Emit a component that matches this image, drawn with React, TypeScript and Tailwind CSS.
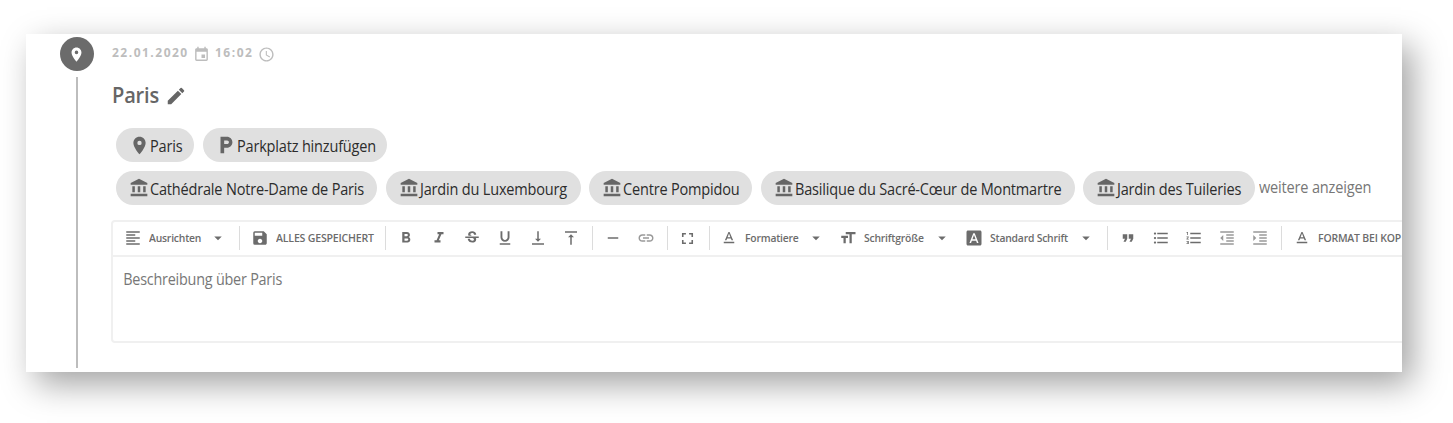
import type { ReactNode } from "react";
import type { IconType } from "react-icons";
import {
  MdPlace, MdEvent, MdAccessTime, MdEdit, MdLocalParking, MdAccountBalance,
  MdFormatAlignLeft, MdArrowDropDown, MdSave, MdFormatBold, MdFormatItalic,
  MdStrikethroughS, MdFormatUnderlined, MdVerticalAlignBottom, MdVerticalAlignTop,
  MdRemove, MdLink, MdFullscreen, MdTextFormat, MdFormatSize, MdFontDownload,
  MdFormatQuote, MdFormatListBulleted, MdFormatListNumbered,
  MdFormatIndentDecrease, MdFormatIndentIncrease,
} from "react-icons/md";

function Chip({ icon: Icon, width, iconClass = "mr-px size-5", children }: {
  icon: IconType; width: string; iconClass?: string; children: ReactNode;
}) {
  return (
    <div className={`flex h-[34px] shrink-0 items-center rounded-full bg-[#e0e0e0] pl-[13px] text-[15.5px] tracking-[-0.2px] text-[#2c2c2c] ${width}`}>
      <Icon className={`shrink-0 text-[#666] ${iconClass}`} />
      <span className="origin-left scale-x-[0.937] whitespace-nowrap pt-1">{children}</span>
    </div>
  );
}

function Tool({ icon: Icon, className = "size-[18px]" }: { icon: IconType; className?: string }) {
  return (
    <button className="flex h-full w-[33px] shrink-0 items-center justify-center">
      <Icon className={className} />
    </button>
  );
}

function Group({ width, pad = "pl-[3px]", last = false, children }: {
  width: string; pad?: string; last?: boolean; children: ReactNode;
}) {
  return (
    <div className={`flex h-6 shrink-0 items-center ${last ? "" : "border-r"} border-[#dcdcdc] ${width} ${pad}`}>
      {children}
    </div>
  );
}

function Menu({ icon: Icon, width, textWidth, label }: { icon: IconType; width: string; textWidth: string; label: string }) {
  return (
    <button className={`flex shrink-0 items-center ${width}`}>
      <Icon className="mr-[7px] size-[18px] shrink-0" />
      <span className={`origin-left scale-x-[0.94] whitespace-nowrap text-left ${textWidth}`}>{label}</span>
      <MdArrowDropDown className="ml-[8px] size-[18px] shrink-0" />
    </button>
  );
}

export default function App() {
  return (
    <div className="h-[423px] w-full overflow-hidden bg-white pl-[26px] pt-[34px] font-['Open_Sans',sans-serif]">
      <div className="h-[338px] w-[1376px] shadow-[10px_12px_32px_rgba(0,0,0,0.37)]">
        <main className="flex h-full w-full overflow-hidden bg-white">
          <aside className="flex w-[86px] shrink-0 flex-col items-center pt-[3px]">
            <div className="ml-[15px] flex size-[34px] items-center justify-center rounded-full bg-[#6b6b6b] text-white">
              <MdPlace className="size-[17px]" />
            </div>
            <div className="ml-4 mt-[6px] h-[291px] w-[2px] bg-[#bdbdbd]" />
          </aside>
          <section className="-ml-px w-[1400px] shrink-0">
            <div className="flex h-[38px] items-center pl-px text-[12px] font-bold tracking-[1.5px] text-[#bdbdbd]">
              <span className="w-[77px] whitespace-nowrap">22.01.2020</span>
              <MdEvent className="ml-[4px] mr-[5px] mt-0.5 size-[17px]" />
              <span className="w-[39px] whitespace-nowrap">16:02</span>
              <MdAccessTime className="ml-[4px] mt-0.5 size-[17px]" />
            </div>
            <div className="flex h-[56px] items-start pl-px pt-[7px] text-[#666]">
              <h1 className="w-[47px] origin-left scale-x-[0.91] text-[22px] font-semibold leading-[30px] tracking-[-0.2px]">Paris</h1>
              <MdEdit className="ml-[6px] mt-[6px] size-[22px]" />
            </div>
            <div className="flex gap-[8.5px] pl-[5px]">
              <Chip icon={MdPlace} iconClass="size-[21px]" width="w-[78px]">Paris</Chip>
              <Chip icon={MdLocalParking} iconClass="-ml-px size-[22px]" width="w-[184.5px]">Parkplatz hinzufügen</Chip>
            </div>
            <div className="mt-[9px] flex pl-[5px]">
              <div className="flex gap-[8.6px]">
                <Chip icon={MdAccountBalance} width="w-[261px]">Cathédrale Notre-Dame de Paris</Chip>
                <Chip icon={MdAccountBalance} width="w-[195px]">Jardin du Luxembourg</Chip>
                <Chip icon={MdAccountBalance} width="w-[163px]">Centre Pompidou</Chip>
                <Chip icon={MdAccountBalance} width="w-[314px]">Basilique du Sacré-Cœur de Montmartre</Chip>
                <Chip icon={MdAccountBalance} width="w-[172px]">Jardin des Tuileries</Chip>
              </div>
              <a className="ml-[4px] mt-[5px] origin-left scale-x-[0.94] whitespace-nowrap text-[15.5px] tracking-[-0.2px] text-[#777]">weitere anzeigen</a>
            </div>
            <div className="mt-[15px] h-[123px] rounded border-2 border-[#f0f0f0]">
              <div className="flex h-[35px] items-center border-b-2 border-[#f0f0f0] pb-px text-[11px] font-semibold tracking-[-0.2px] text-[#6c6c6c]">
                <Group width="w-[127px]" pad="pl-[11px]">
                  <Menu icon={MdFormatAlignLeft} width="w-[110px]" textWidth="w-[52px]" label="Ausrichten" />
                </Group>
                <Group width="w-[146px]" pad="pl-[11px]">
                  <MdSave className="mr-[7px] size-[18px]" />
                  <span className="origin-left scale-x-[0.96] whitespace-nowrap">ALLES GESPEICHERT</span>
                </Group>
                <Group width="w-[207px]">
                  <Tool icon={MdFormatBold} />
                  <Tool icon={MdFormatItalic} />
                  <Tool icon={MdStrikethroughS} />
                  <Tool icon={MdFormatUnderlined} />
                  <Tool icon={MdVerticalAlignBottom} />
                  <Tool icon={MdVerticalAlignTop} />
                </Group>
                <Group width="w-[75px]">
                  <Tool icon={MdRemove} />
                  <Tool icon={MdLink} className="size-[18px] text-[#999]" />
                </Group>
                <Group width="w-[42px]">
                  <Tool icon={MdFullscreen} className="size-[19px]" />
                </Group>
                <Group width="w-[398px]" pad="pl-[10px]">
                  <Menu icon={MdTextFormat} width="w-[119px]" textWidth="w-[54px]" label="Formatiere" />
                  <Menu icon={MdFormatSize} width="w-[126px]" textWidth="w-[61px]" label="Schriftgröße" />
                  <Menu icon={MdFontDownload} width="w-[135px]" textWidth="w-[79px]" label="Standard Schrift" />
                </Group>
                <Group width="w-[174px]">
                  <Tool icon={MdFormatQuote} />
                  <Tool icon={MdFormatListBulleted} />
                  <Tool icon={MdFormatListNumbered} />
                  <Tool icon={MdFormatIndentDecrease} className="size-[18px] text-[#999]" />
                  <Tool icon={MdFormatIndentIncrease} className="size-[18px] text-[#999]" />
                </Group>
                <Group width="w-[180px]" pad="pl-[11px]" last>
                  <MdTextFormat className="mr-[7px] size-[18px] shrink-0" />
                  <span className="origin-left scale-x-[0.95] whitespace-nowrap">FORMAT BEI KOP</span>
                </Group>
              </div>
              <p className="w-fit origin-left scale-x-[0.93] whitespace-nowrap pl-[11px] pt-[11px] text-[15.5px] leading-[22px] tracking-[-0.25px] text-[#777]">Beschreibung über Paris</p>
            </div>
          </section>
        </main>
      </div>
    </div>
  );
}
